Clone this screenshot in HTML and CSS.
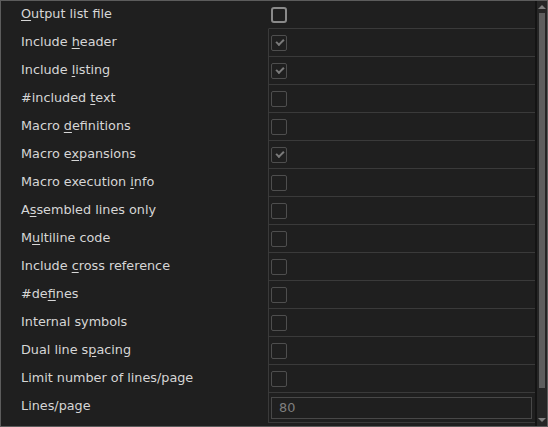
FILE: index.html
```html
<!DOCTYPE html>
<html>
<head>
<meta charset="utf-8">
<link rel="stylesheet" href="styles.css">
</head>
<body>
<div class="panel">
  <div class="grid">
    <div class="row first"><div class="label"><span><u>O</u>utput list file</span></div><div class="value"><span class="cb focus"></span></div></div>
    <div class="row"><div class="label"><span>Include <u>h</u>eader</span></div><div class="value"><span class="cb on"></span></div></div>
    <div class="row"><div class="label"><span>Include <u>l</u>isting</span></div><div class="value"><span class="cb on"></span></div></div>
    <div class="row"><div class="label"><span>#included <u>t</u>ext</span></div><div class="value"><span class="cb"></span></div></div>
    <div class="row"><div class="label"><span>Macro <u>d</u>efinitions</span></div><div class="value"><span class="cb"></span></div></div>
    <div class="row"><div class="label"><span>Macro e<u>x</u>pansions</span></div><div class="value"><span class="cb on"></span></div></div>
    <div class="row"><div class="label"><span>Macro execution <u>i</u>nfo</span></div><div class="value"><span class="cb"></span></div></div>
    <div class="row"><div class="label"><span>A<u>s</u>sembled lines only</span></div><div class="value"><span class="cb"></span></div></div>
    <div class="row"><div class="label"><span>M<u>u</u>ltiline code</span></div><div class="value"><span class="cb"></span></div></div>
    <div class="row"><div class="label"><span>Include <u>c</u>ross reference</span></div><div class="value"><span class="cb"></span></div></div>
    <div class="row"><div class="label"><span>#de<u>f</u>ines</span></div><div class="value"><span class="cb"></span></div></div>
    <div class="row"><div class="label"><span>Internal symbols</span></div><div class="value"><span class="cb"></span></div></div>
    <div class="row"><div class="label"><span>Dual line s<u>p</u>acing</span></div><div class="value"><span class="cb"></span></div></div>
    <div class="row"><div class="label"><span>Limit number of lines/page</span></div><div class="value"><span class="cb"></span></div></div>
    <div class="row last"><div class="label"><span>Lines/page</span></div><div class="value"><div class="input">80</div></div></div>
  </div>
  <div class="scrollbar">
    <div class="arrow up"></div>
    <div class="track"><div class="thumb"></div></div>
    <div class="arrow down"></div>
  </div>
</div>
</body>
</html>
```
FILE: styles.css
```css
html, body {
  margin: 0;
  padding: 0;
  background: #1f1f1f;
}
.panel {
  width: 548px;
  height: 427px;
  box-sizing: border-box;
  border: 1px solid #5c5c5c;
  display: flex;
  background: #1f1f1f;
  font-family: "DejaVu Sans", sans-serif;
  font-size: 12.8px;
  color: #d6d6d6;
}
.grid {
  width: 534px;
  display: flex;
  flex-direction: column;
}
.row {
  display: flex;
  height: 28px;
}
.row.last {
  height: 30px;
}
.label {
  width: 247px;
  padding-left: 20px;
  padding-bottom: 3px;
  display: flex;
  align-items: center;
  white-space: nowrap;
}
.last .label {
  padding-bottom: 5px;
}
.label u {
  text-decoration-thickness: 1px;
  text-underline-offset: 2px;
}
.value {
  flex: 1;
  border-left: 1px solid #3a3a3a;
  border-bottom: 1px solid #3a3a3a;
  display: flex;
  align-items: center;
  padding-left: 2px;
}
.first .value {
  border-left-color: transparent;
}
.cb {
  width: 16px;
  height: 16px;
  box-sizing: border-box;
  border: 1px solid #4e4e4e;
  border-radius: 2px;
  position: relative;
}
.cb.focus {
  border: 2px solid #8a8a8a;
  border-radius: 3px;
}
.cb.on::after {
  content: "";
  position: absolute;
  left: 4px;
  top: 3px;
  width: 6px;
  height: 3px;
  border-left: 2px solid #7a7a7a;
  border-bottom: 2px solid #7a7a7a;
  transform: rotate(-45deg);
  transform-origin: center;
}
.input {
  width: 261px;
  height: 22px;
  box-sizing: border-box;
  border: 1px solid #484848;
  color: #808080;
  padding-left: 7px;
  line-height: 20px;
  font-size: 12.8px;
}
.scrollbar {
  width: 10px;
  border-left: 2px solid #141414;
  background: #262626;
  display: flex;
  flex-direction: column;
  align-items: center;
}
.arrow {
  width: 0;
  height: 0;
  border-left: 4px solid transparent;
  border-right: 4px solid transparent;
}
.arrow.up {
  margin-top: 4px;
  border-bottom: 4px solid #808080;
}
.arrow.down {
  margin-bottom: 4px;
  border-top: 4px solid #808080;
}
.track {
  flex: 1;
  width: 100%;
  padding: 4px 0 30px 2px;
  box-sizing: border-box;
}
.thumb {
  width: 6px;
  height: 100%;
  background: #5e5e5e;
}
```
